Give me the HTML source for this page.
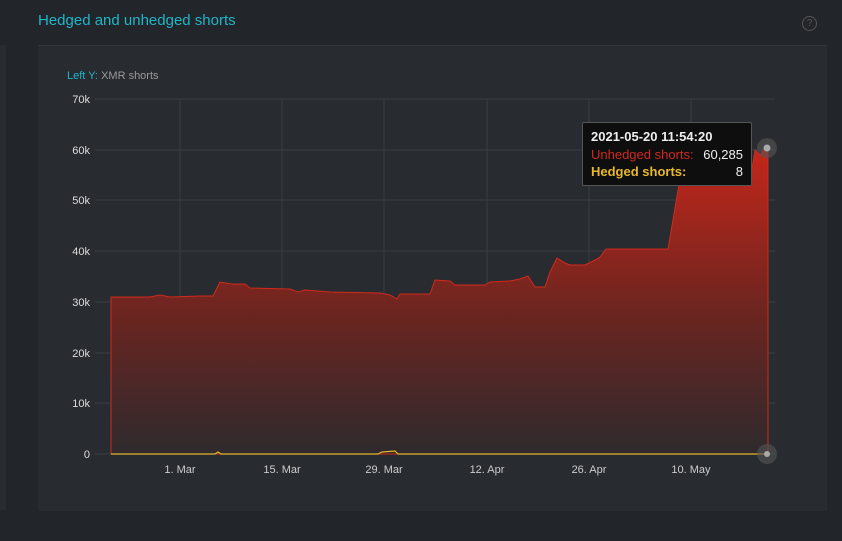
<!DOCTYPE html>
<html><head><meta charset="utf-8"><style>
body{margin:0;width:842px;height:541px;background:#222529;font-family:"Liberation Sans",sans-serif;overflow:hidden;position:relative}
.t{position:absolute;left:38px;top:12px;color:#1fb6c9;font-size:15px}
.q{position:absolute;left:802px;top:16px;width:13px;height:13px;border:1.5px solid #555;border-radius:50%;color:#555;font-size:10px;text-align:center;line-height:13px}
.p{position:absolute;left:38px;top:45px;width:789px;height:465px;background:#282b30;border-top:1px solid #33363b}
.s{position:absolute;left:0;top:45px;width:6px;height:465px;background:#282b30}
.tt{position:absolute;left:582px;top:122px;width:168px;height:62px;background:#0e0e0f;border:1px solid #555;border-radius:2px;font-size:13px;color:#eee}
</style></head><body>
<div class="t">Hedged and unhedged shorts</div>
<div class="q">?</div>
<div class="s"></div>
<div class="p"></div>
<svg width="842" height="541" style="position:absolute;left:0;top:0" font-family="Liberation Sans" font-size="11">
<defs><linearGradient id="g" x1="0" y1="0" x2="0" y2="1"><stop offset="0" stop-color="#c4261a"/><stop offset="0.55" stop-color="#6a2520"/><stop offset="1" stop-color="#2e2a2d"/></linearGradient></defs>
<text x="67" y="79" fill="#1fb6c9">Left Y: <tspan fill="#999">XMR shorts</tspan></text>
<g stroke="#3a3d42" stroke-width="1">
<line x1="95" y1="99" x2="775" y2="99"/><line x1="95" y1="150" x2="775" y2="150"/><line x1="95" y1="200" x2="775" y2="200"/><line x1="95" y1="251" x2="775" y2="251"/><line x1="95" y1="302" x2="775" y2="302"/><line x1="95" y1="353" x2="775" y2="353"/><line x1="95" y1="403" x2="775" y2="403"/><line x1="95" y1="454" x2="775" y2="454"/>
<line x1="180" y1="99" x2="180" y2="454"/><line x1="282" y1="99" x2="282" y2="454"/><line x1="384" y1="99" x2="384" y2="454"/><line x1="487" y1="99" x2="487" y2="454"/><line x1="589" y1="99" x2="589" y2="454"/><line x1="691" y1="99" x2="691" y2="454"/>
</g>
<g fill="#ddd" text-anchor="end"><text x="90" y="103">70k</text><text x="90" y="154">60k</text><text x="90" y="204">50k</text><text x="90" y="255">40k</text><text x="90" y="306">30k</text><text x="90" y="357">20k</text><text x="90" y="407">10k</text><text x="90" y="458">0</text></g>
<g fill="#ccc" text-anchor="middle"><text x="180" y="473">1. Mar</text><text x="282" y="473">15. Mar</text><text x="384" y="473">29. Mar</text><text x="487" y="473">12. Apr</text><text x="589" y="473">26. Apr</text><text x="691" y="473">10. May</text></g>
<path d="M111,297 L150,297 160,295 170,297 200,296 213,296 220,282 232,284 245,284 250,288 290,289 298,292 305,290 330,292 380,293 390,295 397,299 400,294 430,294 435,280 450,281 455,285 485,285 490,282 510,281 520,279 528,276 535,287 545,287 550,272 557,258 565,263 570,265 585,265 595,260 600,257 606,249 640,249 668,249 684,155 700,155 702,169 752,169 755,150 760,155 765,148 768,148 768,454 111,454Z" fill="url(#g)" stroke="#d02a1c" stroke-width="1"/>
<path d="M111,454 L215,454 218,452 221,454 378,454 382,452 395,451 398,454 768,454" stroke="#e5b52a" stroke-width="1.2" fill="none"/>
<circle cx="767" cy="148" r="10" fill="#555" opacity="0.6"/><circle cx="767" cy="148" r="3.5" fill="#aaa"/>
<circle cx="767" cy="454" r="10" fill="#555" opacity="0.6"/><circle cx="767" cy="454" r="3" fill="#aaa"/>
</svg>
<div class="tt">
<div style="position:absolute;left:8px;top:6px;font-weight:bold">2021-05-20 11:54:20</div>
<div style="position:absolute;left:8px;top:24px;color:#d0281b">Unhedged shorts:</div><div style="position:absolute;right:8px;top:24px">60,285</div>
<div style="position:absolute;left:8px;top:41px;color:#e8b82c;font-weight:bold">Hedged shorts:</div><div style="position:absolute;right:8px;top:41px">8</div>
</div>
</body></html>
